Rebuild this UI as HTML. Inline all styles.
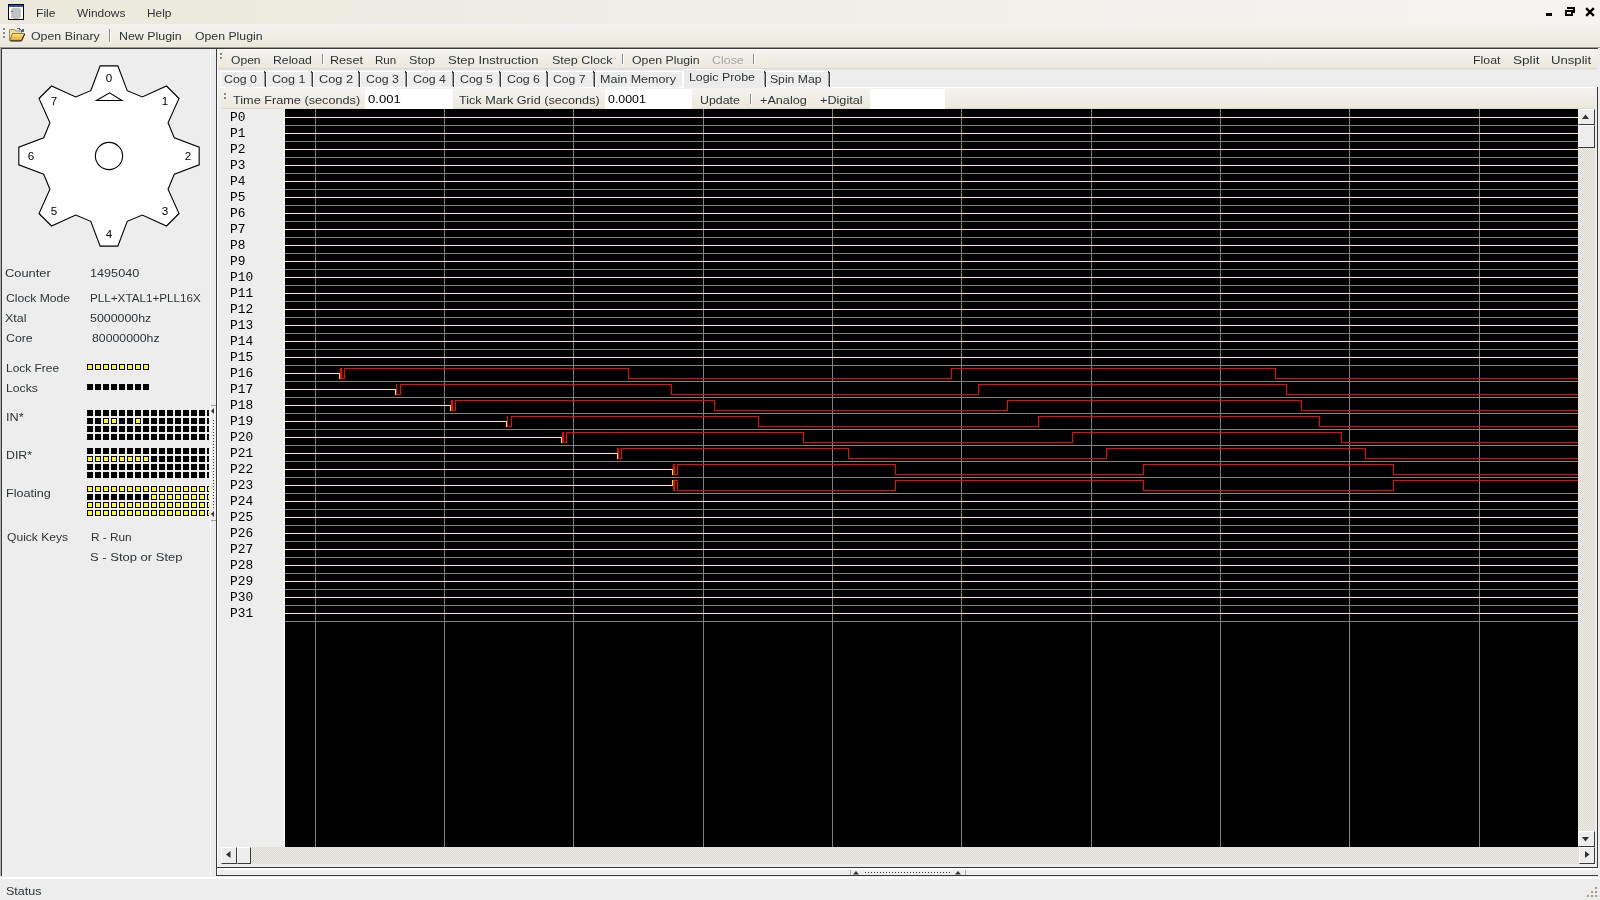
<!DOCTYPE html>
<html><head><meta charset="utf-8"><style>
html,body{margin:0;padding:0}
body{width:1600px;height:900px;position:relative;overflow:hidden;background:#ededed;font-family:"Liberation Sans",sans-serif}
.t{position:absolute;font-size:11.6px;line-height:14px;white-space:pre;transform-origin:0 0;will-change:transform}
.m{position:absolute;font-family:"Liberation Mono",monospace;font-size:12px;line-height:14px;white-space:pre;color:#000;transform-origin:0 0;transform:scaleX(1.07);will-change:transform}
.chk{position:absolute;background-color:#ededed;background-image:linear-gradient(45deg,#dbd7cb 25%,transparent 25%,transparent 75%,#dbd7cb 75%),linear-gradient(45deg,#dbd7cb 25%,transparent 25%,transparent 75%,#dbd7cb 75%);background-size:2px 2px;background-position:0 0,1px 1px}
</style></head><body>
<div style="position:absolute;left:0px;top:0px;width:1600px;height:24px;background:linear-gradient(to right,#ebe8db,#f0eee8 50%,#f5f4f2);"></div>
<svg style="position:absolute;left:7px;top:3px" width="18" height="18" shape-rendering="crispEdges"><rect x="1.5" y="1.5" width="15" height="15" rx="1" fill="#fff" stroke="#000" stroke-width="1.2"/><rect x="2" y="2" width="14" height="2" fill="#2a52a0"/><rect x="3.5" y="5" width="10.5" height="10.6" rx="3" fill="#c2c2c2"/><rect x="3.5" y="7.5" width="2" height="1.5" fill="#777"/></svg>
<svg style="position:absolute;left:1540px;top:0px" width="60" height="24" shape-rendering="crispEdges"><rect x="6" y="13" width="6" height="3" fill="#000"/><rect x="27" y="7" width="8" height="2" fill="#000"/><rect x="33" y="7" width="2" height="6" fill="#000"/><rect x="25" y="10" width="8" height="6" fill="#000"/><rect x="27" y="12" width="4" height="2" fill="#f5f4f2"/><path d="M47 9 L53 15 M53 9 L47 15" stroke="#000" stroke-width="2.4" stroke-linecap="square" shape-rendering="auto"/></svg>
<div style="position:absolute;left:0px;top:24px;width:1600px;height:23px;background:linear-gradient(#f4f3f1,#ebe8da);"></div>
<div style="position:absolute;left:0px;top:47px;width:1600px;height:1px;background:#9a9890;"></div>
<div style="position:absolute;left:0px;top:48px;width:1598px;height:1px;background:#3a3a3a;"></div>
<div style="position:absolute;left:3px;top:28px;width:2px;height:2px;background:#8a8a8a;"></div>
<div style="position:absolute;left:3px;top:32px;width:2px;height:2px;background:#8a8a8a;"></div>
<div style="position:absolute;left:3px;top:36px;width:2px;height:2px;background:#8a8a8a;"></div>
<svg style="position:absolute;left:9px;top:27px" width="18" height="16"><defs><linearGradient id="fg" x1="0" y1="0" x2="0" y2="1"><stop offset="0" stop-color="#fde68c"/><stop offset="1" stop-color="#eea21a"/></linearGradient></defs><path d="M0.5 2.5 H5.5 L7 4 H12.5 V6.5 H4 L0.5 13.5 Z" fill="#f8e08a" stroke="#8f8468" stroke-width="0.9"/><path d="M3.5 6.5 H15.5 L12.3 13.5 H0.8 Z" fill="url(#fg)" stroke="#7d7058" stroke-width="0.9"/><path d="M1.5 14 H12.5 L15.8 7" stroke="#1a1a1a" stroke-width="1" fill="none"/><rect x="8" y="1" width="3" height="1" fill="#3d64a8"/><rect x="10" y="2" width="2" height="1" fill="#3d64a8"/><rect x="13" y="2" width="2" height="3" fill="#3d64a8"/><rect x="12" y="3" width="1" height="2" fill="#3d64a8"/></svg>
<div style="position:absolute;left:109px;top:29px;width:1px;height:13px;background:#8a8a8a;"></div>
<div style="position:absolute;left:110px;top:30px;width:1px;height:13px;background:#ffffff;"></div>
<div style="position:absolute;left:0px;top:877px;width:1600px;height:2px;background:#ffffff;"></div>
<div style="position:absolute;left:1595px;top:887px;width:2px;height:2px;background:#a49d8a;"></div>
<div style="position:absolute;left:1591px;top:891px;width:2px;height:2px;background:#a49d8a;"></div>
<div style="position:absolute;left:1595px;top:891px;width:2px;height:2px;background:#a49d8a;"></div>
<div style="position:absolute;left:1587px;top:895px;width:2px;height:2px;background:#a49d8a;"></div>
<div style="position:absolute;left:1591px;top:895px;width:2px;height:2px;background:#a49d8a;"></div>
<div style="position:absolute;left:1595px;top:895px;width:2px;height:2px;background:#a49d8a;"></div>
<div style="position:absolute;left:1px;top:48px;width:1px;height:828px;background:#3a3a3a;"></div>
<div style="position:absolute;left:0px;top:48px;width:1px;height:828px;background:#b0b0b0;"></div>
<div style="position:absolute;left:210px;top:49px;width:1px;height:826px;background:#ffffff;"></div>
<svg style="position:absolute;left:0;top:0" width="215" height="260"><polygon points="90.77,90.70 100.16,65.83 117.84,65.83 127.23,90.70 142.28,96.93 166.51,85.99 179.01,98.49 168.07,122.72 174.30,137.77 199.17,147.16 199.17,164.84 174.30,174.23 168.07,189.28 179.01,213.51 166.51,226.01 142.28,215.07 127.23,221.30 117.84,246.17 100.16,246.17 90.77,221.30 75.72,215.07 51.49,226.01 38.99,213.51 49.93,189.28 43.70,174.23 18.83,164.84 18.83,147.16 43.70,137.77 49.93,122.72 38.99,98.49 51.49,85.99 75.72,96.93" fill="#fff" stroke="#000" stroke-width="1.1"/><circle cx="109" cy="156" r="13.6" fill="none" stroke="#000" stroke-width="1.1"/><path d="M96.5 100.5 L109.5 92.8 L122 100.5 Z" fill="none" stroke="#000" stroke-width="1.1"/></svg>
<div class="t" style="left:99.3px;top:71.0px;width:20px;text-align:center;color:#000">0</div>
<div class="t" style="left:154.6px;top:93.8px;width:20px;text-align:center;color:#000">1</div>
<div class="t" style="left:177.5px;top:149.0px;width:20px;text-align:center;color:#000">2</div>
<div class="t" style="left:154.6px;top:203.8px;width:20px;text-align:center;color:#000">3</div>
<div class="t" style="left:99.3px;top:226.5px;width:20px;text-align:center;color:#000">4</div>
<div class="t" style="left:44.0px;top:203.8px;width:20px;text-align:center;color:#000">5</div>
<div class="t" style="left:21.1px;top:149.0px;width:20px;text-align:center;color:#000">6</div>
<div class="t" style="left:44.0px;top:93.8px;width:20px;text-align:center;color:#000">7</div>
<svg style="position:absolute;left:0;top:0" width="209" height="600" shape-rendering="crispEdges"><rect x="87.5" y="364.5" width="5" height="5" fill="#ff0" stroke="#000" stroke-width="1"/><rect x="87" y="384" width="6" height="6" fill="#000"/><rect x="95.5" y="364.5" width="5" height="5" fill="#ff0" stroke="#000" stroke-width="1"/><rect x="95" y="384" width="6" height="6" fill="#000"/><rect x="103.5" y="364.5" width="5" height="5" fill="#ff0" stroke="#000" stroke-width="1"/><rect x="103" y="384" width="6" height="6" fill="#000"/><rect x="111.5" y="364.5" width="5" height="5" fill="#ff0" stroke="#000" stroke-width="1"/><rect x="111" y="384" width="6" height="6" fill="#000"/><rect x="119.5" y="364.5" width="5" height="5" fill="#ff0" stroke="#000" stroke-width="1"/><rect x="119" y="384" width="6" height="6" fill="#000"/><rect x="127.5" y="364.5" width="5" height="5" fill="#ff0" stroke="#000" stroke-width="1"/><rect x="127" y="384" width="6" height="6" fill="#000"/><rect x="135.5" y="364.5" width="5" height="5" fill="#ff0" stroke="#000" stroke-width="1"/><rect x="135" y="384" width="6" height="6" fill="#000"/><rect x="143.5" y="364.5" width="5" height="5" fill="#ff0" stroke="#000" stroke-width="1"/><rect x="143" y="384" width="6" height="6" fill="#000"/><rect x="87" y="410" width="6" height="6" fill="#000"/><rect x="95" y="410" width="6" height="6" fill="#000"/><rect x="103" y="410" width="6" height="6" fill="#000"/><rect x="111" y="410" width="6" height="6" fill="#000"/><rect x="119" y="410" width="6" height="6" fill="#000"/><rect x="127" y="410" width="6" height="6" fill="#000"/><rect x="135" y="410" width="6" height="6" fill="#000"/><rect x="143" y="410" width="6" height="6" fill="#000"/><rect x="151" y="410" width="6" height="6" fill="#000"/><rect x="159" y="410" width="6" height="6" fill="#000"/><rect x="167" y="410" width="6" height="6" fill="#000"/><rect x="175" y="410" width="6" height="6" fill="#000"/><rect x="183" y="410" width="6" height="6" fill="#000"/><rect x="191" y="410" width="6" height="6" fill="#000"/><rect x="199" y="410" width="6" height="6" fill="#000"/><rect x="207" y="410" width="6" height="6" fill="#000"/><rect x="87" y="418" width="6" height="6" fill="#000"/><rect x="95" y="418" width="6" height="6" fill="#000"/><rect x="103.5" y="418.5" width="5" height="5" fill="#ff0" stroke="#000" stroke-width="1"/><rect x="111.5" y="418.5" width="5" height="5" fill="#ff0" stroke="#000" stroke-width="1"/><rect x="119" y="418" width="6" height="6" fill="#000"/><rect x="127" y="418" width="6" height="6" fill="#000"/><rect x="135.5" y="418.5" width="5" height="5" fill="#ff0" stroke="#000" stroke-width="1"/><rect x="143" y="418" width="6" height="6" fill="#000"/><rect x="151" y="418" width="6" height="6" fill="#000"/><rect x="159" y="418" width="6" height="6" fill="#000"/><rect x="167" y="418" width="6" height="6" fill="#000"/><rect x="175" y="418" width="6" height="6" fill="#000"/><rect x="183" y="418" width="6" height="6" fill="#000"/><rect x="191" y="418" width="6" height="6" fill="#000"/><rect x="199" y="418" width="6" height="6" fill="#000"/><rect x="207" y="418" width="6" height="6" fill="#000"/><rect x="87" y="426" width="6" height="6" fill="#000"/><rect x="95" y="426" width="6" height="6" fill="#000"/><rect x="103" y="426" width="6" height="6" fill="#000"/><rect x="111" y="426" width="6" height="6" fill="#000"/><rect x="119" y="426" width="6" height="6" fill="#000"/><rect x="127" y="426" width="6" height="6" fill="#000"/><rect x="135" y="426" width="6" height="6" fill="#000"/><rect x="143" y="426" width="6" height="6" fill="#000"/><rect x="151" y="426" width="6" height="6" fill="#000"/><rect x="159" y="426" width="6" height="6" fill="#000"/><rect x="167" y="426" width="6" height="6" fill="#000"/><rect x="175" y="426" width="6" height="6" fill="#000"/><rect x="183" y="426" width="6" height="6" fill="#000"/><rect x="191" y="426" width="6" height="6" fill="#000"/><rect x="199" y="426" width="6" height="6" fill="#000"/><rect x="207" y="426" width="6" height="6" fill="#000"/><rect x="87" y="434" width="6" height="6" fill="#000"/><rect x="95" y="434" width="6" height="6" fill="#000"/><rect x="103" y="434" width="6" height="6" fill="#000"/><rect x="111" y="434" width="6" height="6" fill="#000"/><rect x="119" y="434" width="6" height="6" fill="#000"/><rect x="127" y="434" width="6" height="6" fill="#000"/><rect x="135" y="434" width="6" height="6" fill="#000"/><rect x="143" y="434" width="6" height="6" fill="#000"/><rect x="151" y="434" width="6" height="6" fill="#000"/><rect x="159" y="434" width="6" height="6" fill="#000"/><rect x="167" y="434" width="6" height="6" fill="#000"/><rect x="175" y="434" width="6" height="6" fill="#000"/><rect x="183" y="434" width="6" height="6" fill="#000"/><rect x="191" y="434" width="6" height="6" fill="#000"/><rect x="199" y="434" width="6" height="6" fill="#000"/><rect x="207" y="434" width="6" height="6" fill="#000"/><rect x="87" y="448" width="6" height="6" fill="#000"/><rect x="95" y="448" width="6" height="6" fill="#000"/><rect x="103" y="448" width="6" height="6" fill="#000"/><rect x="111" y="448" width="6" height="6" fill="#000"/><rect x="119" y="448" width="6" height="6" fill="#000"/><rect x="127" y="448" width="6" height="6" fill="#000"/><rect x="135" y="448" width="6" height="6" fill="#000"/><rect x="143" y="448" width="6" height="6" fill="#000"/><rect x="151" y="448" width="6" height="6" fill="#000"/><rect x="159" y="448" width="6" height="6" fill="#000"/><rect x="167" y="448" width="6" height="6" fill="#000"/><rect x="175" y="448" width="6" height="6" fill="#000"/><rect x="183" y="448" width="6" height="6" fill="#000"/><rect x="191" y="448" width="6" height="6" fill="#000"/><rect x="199" y="448" width="6" height="6" fill="#000"/><rect x="207" y="448" width="6" height="6" fill="#000"/><rect x="87.5" y="456.5" width="5" height="5" fill="#ff0" stroke="#000" stroke-width="1"/><rect x="95.5" y="456.5" width="5" height="5" fill="#ff0" stroke="#000" stroke-width="1"/><rect x="103.5" y="456.5" width="5" height="5" fill="#ff0" stroke="#000" stroke-width="1"/><rect x="111.5" y="456.5" width="5" height="5" fill="#ff0" stroke="#000" stroke-width="1"/><rect x="119.5" y="456.5" width="5" height="5" fill="#ff0" stroke="#000" stroke-width="1"/><rect x="127.5" y="456.5" width="5" height="5" fill="#ff0" stroke="#000" stroke-width="1"/><rect x="135.5" y="456.5" width="5" height="5" fill="#ff0" stroke="#000" stroke-width="1"/><rect x="143.5" y="456.5" width="5" height="5" fill="#ff0" stroke="#000" stroke-width="1"/><rect x="151" y="456" width="6" height="6" fill="#000"/><rect x="159" y="456" width="6" height="6" fill="#000"/><rect x="167" y="456" width="6" height="6" fill="#000"/><rect x="175" y="456" width="6" height="6" fill="#000"/><rect x="183" y="456" width="6" height="6" fill="#000"/><rect x="191" y="456" width="6" height="6" fill="#000"/><rect x="199" y="456" width="6" height="6" fill="#000"/><rect x="207" y="456" width="6" height="6" fill="#000"/><rect x="87" y="464" width="6" height="6" fill="#000"/><rect x="95" y="464" width="6" height="6" fill="#000"/><rect x="103" y="464" width="6" height="6" fill="#000"/><rect x="111" y="464" width="6" height="6" fill="#000"/><rect x="119" y="464" width="6" height="6" fill="#000"/><rect x="127" y="464" width="6" height="6" fill="#000"/><rect x="135" y="464" width="6" height="6" fill="#000"/><rect x="143" y="464" width="6" height="6" fill="#000"/><rect x="151" y="464" width="6" height="6" fill="#000"/><rect x="159" y="464" width="6" height="6" fill="#000"/><rect x="167" y="464" width="6" height="6" fill="#000"/><rect x="175" y="464" width="6" height="6" fill="#000"/><rect x="183" y="464" width="6" height="6" fill="#000"/><rect x="191" y="464" width="6" height="6" fill="#000"/><rect x="199" y="464" width="6" height="6" fill="#000"/><rect x="207" y="464" width="6" height="6" fill="#000"/><rect x="87" y="472" width="6" height="6" fill="#000"/><rect x="95" y="472" width="6" height="6" fill="#000"/><rect x="103" y="472" width="6" height="6" fill="#000"/><rect x="111" y="472" width="6" height="6" fill="#000"/><rect x="119" y="472" width="6" height="6" fill="#000"/><rect x="127" y="472" width="6" height="6" fill="#000"/><rect x="135" y="472" width="6" height="6" fill="#000"/><rect x="143" y="472" width="6" height="6" fill="#000"/><rect x="151" y="472" width="6" height="6" fill="#000"/><rect x="159" y="472" width="6" height="6" fill="#000"/><rect x="167" y="472" width="6" height="6" fill="#000"/><rect x="175" y="472" width="6" height="6" fill="#000"/><rect x="183" y="472" width="6" height="6" fill="#000"/><rect x="191" y="472" width="6" height="6" fill="#000"/><rect x="199" y="472" width="6" height="6" fill="#000"/><rect x="207" y="472" width="6" height="6" fill="#000"/><rect x="87.5" y="486.5" width="5" height="5" fill="#ff0" stroke="#000" stroke-width="1"/><rect x="95.5" y="486.5" width="5" height="5" fill="#ff0" stroke="#000" stroke-width="1"/><rect x="103.5" y="486.5" width="5" height="5" fill="#ff0" stroke="#000" stroke-width="1"/><rect x="111.5" y="486.5" width="5" height="5" fill="#ff0" stroke="#000" stroke-width="1"/><rect x="119.5" y="486.5" width="5" height="5" fill="#ff0" stroke="#000" stroke-width="1"/><rect x="127.5" y="486.5" width="5" height="5" fill="#ff0" stroke="#000" stroke-width="1"/><rect x="135.5" y="486.5" width="5" height="5" fill="#ff0" stroke="#000" stroke-width="1"/><rect x="143.5" y="486.5" width="5" height="5" fill="#ff0" stroke="#000" stroke-width="1"/><rect x="151.5" y="486.5" width="5" height="5" fill="#ff0" stroke="#000" stroke-width="1"/><rect x="159.5" y="486.5" width="5" height="5" fill="#ff0" stroke="#000" stroke-width="1"/><rect x="167.5" y="486.5" width="5" height="5" fill="#ff0" stroke="#000" stroke-width="1"/><rect x="175.5" y="486.5" width="5" height="5" fill="#ff0" stroke="#000" stroke-width="1"/><rect x="183.5" y="486.5" width="5" height="5" fill="#ff0" stroke="#000" stroke-width="1"/><rect x="191.5" y="486.5" width="5" height="5" fill="#ff0" stroke="#000" stroke-width="1"/><rect x="199.5" y="486.5" width="5" height="5" fill="#ff0" stroke="#000" stroke-width="1"/><rect x="207.5" y="486.5" width="5" height="5" fill="#ff0" stroke="#000" stroke-width="1"/><rect x="87" y="494" width="6" height="6" fill="#000"/><rect x="95" y="494" width="6" height="6" fill="#000"/><rect x="103" y="494" width="6" height="6" fill="#000"/><rect x="111" y="494" width="6" height="6" fill="#000"/><rect x="119" y="494" width="6" height="6" fill="#000"/><rect x="127" y="494" width="6" height="6" fill="#000"/><rect x="135" y="494" width="6" height="6" fill="#000"/><rect x="143" y="494" width="6" height="6" fill="#000"/><rect x="151.5" y="494.5" width="5" height="5" fill="#ff0" stroke="#000" stroke-width="1"/><rect x="159.5" y="494.5" width="5" height="5" fill="#ff0" stroke="#000" stroke-width="1"/><rect x="167.5" y="494.5" width="5" height="5" fill="#ff0" stroke="#000" stroke-width="1"/><rect x="175.5" y="494.5" width="5" height="5" fill="#ff0" stroke="#000" stroke-width="1"/><rect x="183.5" y="494.5" width="5" height="5" fill="#ff0" stroke="#000" stroke-width="1"/><rect x="191.5" y="494.5" width="5" height="5" fill="#ff0" stroke="#000" stroke-width="1"/><rect x="199.5" y="494.5" width="5" height="5" fill="#ff0" stroke="#000" stroke-width="1"/><rect x="207.5" y="494.5" width="5" height="5" fill="#ff0" stroke="#000" stroke-width="1"/><rect x="87.5" y="502.5" width="5" height="5" fill="#ff0" stroke="#000" stroke-width="1"/><rect x="95.5" y="502.5" width="5" height="5" fill="#ff0" stroke="#000" stroke-width="1"/><rect x="103.5" y="502.5" width="5" height="5" fill="#ff0" stroke="#000" stroke-width="1"/><rect x="111.5" y="502.5" width="5" height="5" fill="#ff0" stroke="#000" stroke-width="1"/><rect x="119.5" y="502.5" width="5" height="5" fill="#ff0" stroke="#000" stroke-width="1"/><rect x="127.5" y="502.5" width="5" height="5" fill="#ff0" stroke="#000" stroke-width="1"/><rect x="135.5" y="502.5" width="5" height="5" fill="#ff0" stroke="#000" stroke-width="1"/><rect x="143.5" y="502.5" width="5" height="5" fill="#ff0" stroke="#000" stroke-width="1"/><rect x="151.5" y="502.5" width="5" height="5" fill="#ff0" stroke="#000" stroke-width="1"/><rect x="159.5" y="502.5" width="5" height="5" fill="#ff0" stroke="#000" stroke-width="1"/><rect x="167.5" y="502.5" width="5" height="5" fill="#ff0" stroke="#000" stroke-width="1"/><rect x="175.5" y="502.5" width="5" height="5" fill="#ff0" stroke="#000" stroke-width="1"/><rect x="183.5" y="502.5" width="5" height="5" fill="#ff0" stroke="#000" stroke-width="1"/><rect x="191.5" y="502.5" width="5" height="5" fill="#ff0" stroke="#000" stroke-width="1"/><rect x="199.5" y="502.5" width="5" height="5" fill="#ff0" stroke="#000" stroke-width="1"/><rect x="207.5" y="502.5" width="5" height="5" fill="#ff0" stroke="#000" stroke-width="1"/><rect x="87.5" y="510.5" width="5" height="5" fill="#ff0" stroke="#000" stroke-width="1"/><rect x="95.5" y="510.5" width="5" height="5" fill="#ff0" stroke="#000" stroke-width="1"/><rect x="103.5" y="510.5" width="5" height="5" fill="#ff0" stroke="#000" stroke-width="1"/><rect x="111.5" y="510.5" width="5" height="5" fill="#ff0" stroke="#000" stroke-width="1"/><rect x="119.5" y="510.5" width="5" height="5" fill="#ff0" stroke="#000" stroke-width="1"/><rect x="127.5" y="510.5" width="5" height="5" fill="#ff0" stroke="#000" stroke-width="1"/><rect x="135.5" y="510.5" width="5" height="5" fill="#ff0" stroke="#000" stroke-width="1"/><rect x="143.5" y="510.5" width="5" height="5" fill="#ff0" stroke="#000" stroke-width="1"/><rect x="151.5" y="510.5" width="5" height="5" fill="#ff0" stroke="#000" stroke-width="1"/><rect x="159.5" y="510.5" width="5" height="5" fill="#ff0" stroke="#000" stroke-width="1"/><rect x="167.5" y="510.5" width="5" height="5" fill="#ff0" stroke="#000" stroke-width="1"/><rect x="175.5" y="510.5" width="5" height="5" fill="#ff0" stroke="#000" stroke-width="1"/><rect x="183.5" y="510.5" width="5" height="5" fill="#ff0" stroke="#000" stroke-width="1"/><rect x="191.5" y="510.5" width="5" height="5" fill="#ff0" stroke="#000" stroke-width="1"/><rect x="199.5" y="510.5" width="5" height="5" fill="#ff0" stroke="#000" stroke-width="1"/><rect x="207.5" y="510.5" width="5" height="5" fill="#ff0" stroke="#000" stroke-width="1"/></svg>
<svg style="position:absolute;left:210px;top:400px" width="6" height="125" shape-rendering="crispEdges"><rect x="1" y="5" width="5" height="1" fill="#999"/><rect x="1" y="120" width="5" height="1" fill="#999"/><path d="M1 11 L4 8 L4 14 Z" fill="#333" shape-rendering="auto"/><path d="M1 114 L4 111 L4 117 Z" fill="#333" shape-rendering="auto"/><rect x="3" y="20" width="1" height="1" fill="#333"/><rect x="3" y="23" width="1" height="1" fill="#333"/><rect x="3" y="26" width="1" height="1" fill="#333"/><rect x="3" y="29" width="1" height="1" fill="#333"/><rect x="3" y="32" width="1" height="1" fill="#333"/><rect x="3" y="35" width="1" height="1" fill="#333"/><rect x="3" y="38" width="1" height="1" fill="#333"/><rect x="3" y="41" width="1" height="1" fill="#333"/><rect x="3" y="44" width="1" height="1" fill="#333"/><rect x="3" y="47" width="1" height="1" fill="#333"/><rect x="3" y="50" width="1" height="1" fill="#333"/><rect x="3" y="53" width="1" height="1" fill="#333"/><rect x="3" y="56" width="1" height="1" fill="#333"/><rect x="3" y="59" width="1" height="1" fill="#333"/><rect x="3" y="62" width="1" height="1" fill="#333"/><rect x="3" y="65" width="1" height="1" fill="#333"/><rect x="3" y="68" width="1" height="1" fill="#333"/><rect x="3" y="71" width="1" height="1" fill="#333"/><rect x="3" y="74" width="1" height="1" fill="#333"/><rect x="3" y="77" width="1" height="1" fill="#333"/><rect x="3" y="80" width="1" height="1" fill="#333"/><rect x="3" y="83" width="1" height="1" fill="#333"/><rect x="3" y="86" width="1" height="1" fill="#333"/><rect x="3" y="89" width="1" height="1" fill="#333"/><rect x="3" y="92" width="1" height="1" fill="#333"/><rect x="3" y="95" width="1" height="1" fill="#333"/><rect x="3" y="98" width="1" height="1" fill="#333"/><rect x="3" y="101" width="1" height="1" fill="#333"/><rect x="3" y="104" width="1" height="1" fill="#333"/><rect x="3" y="107" width="1" height="1" fill="#333"/></svg>
<div style="position:absolute;left:216px;top:48px;width:1px;height:828px;background:#3a3a3a;"></div>
<div style="position:absolute;left:217px;top:49px;width:1381px;height:826px;background:#ededed;"></div>
<div style="position:absolute;left:217px;top:49px;width:1px;height:826px;background:#ffffff;"></div>
<div style="position:absolute;left:1597px;top:87px;width:1px;height:781px;background:#3a3a3a;"></div>
<div style="position:absolute;left:216px;top:875px;width:1382px;height:1px;background:#3a3a3a;"></div>
<div style="position:absolute;left:218px;top:49px;width:1379px;height:20px;background:linear-gradient(#f4f3f1,#ebe8da);"></div>
<div style="position:absolute;left:218px;top:49px;width:1379px;height:1px;background:#ffffff;"></div>
<div style="position:absolute;left:218px;top:68px;width:1379px;height:1px;background:#dcdad0;"></div>
<div style="position:absolute;left:220px;top:53px;width:2px;height:2px;background:#8a8a8a;"></div>
<div style="position:absolute;left:220px;top:57px;width:2px;height:2px;background:#8a8a8a;"></div>
<div style="position:absolute;left:322px;top:54px;width:1px;height:10px;background:#8a8a8a;"></div>
<div style="position:absolute;left:323px;top:55px;width:1px;height:10px;background:#ffffff;"></div>
<div style="position:absolute;left:622px;top:54px;width:1px;height:10px;background:#8a8a8a;"></div>
<div style="position:absolute;left:623px;top:55px;width:1px;height:10px;background:#ffffff;"></div>
<div style="position:absolute;left:753px;top:54px;width:1px;height:10px;background:#8a8a8a;"></div>
<div style="position:absolute;left:754px;top:55px;width:1px;height:10px;background:#ffffff;"></div>
<div style="position:absolute;left:218px;top:69px;width:1379px;height:1px;background:#e6e6e4;"></div>
<div style="position:absolute;left:220px;top:71px;width:463px;height:16px;background:#ededed;"></div>
<div style="position:absolute;left:220px;top:71px;width:463px;height:1px;background:#ffffff;"></div>
<div style="position:absolute;left:220px;top:71px;width:1px;height:16px;background:#ffffff;"></div>
<div style="position:absolute;left:682px;top:71px;width:1px;height:16px;background:#ffffff;"></div>
<div style="position:absolute;left:766px;top:71px;width:64px;height:16px;background:#ededed;"></div>
<div style="position:absolute;left:766px;top:71px;width:64px;height:1px;background:#ffffff;"></div>
<div style="position:absolute;left:683px;top:69px;width:82px;height:20px;background:#ebebeb;"></div>
<div style="position:absolute;left:684px;top:69px;width:81px;height:1px;background:#ffffff;"></div>
<div style="position:absolute;left:683px;top:70px;width:1px;height:18px;background:#ffffff;"></div>
<div style="position:absolute;left:265px;top:72px;width:1px;height:15px;background:#3a3a3a;"></div>
<div style="position:absolute;left:264px;top:73px;width:1px;height:13px;background:#9a9a9a;"></div>
<div style="position:absolute;left:266px;top:72px;width:1px;height:15px;background:#ffffff;"></div>
<div style="position:absolute;left:264px;top:71px;width:1px;height:2px;background:#3a3a3a;"></div>
<div style="position:absolute;left:312px;top:72px;width:1px;height:15px;background:#3a3a3a;"></div>
<div style="position:absolute;left:311px;top:73px;width:1px;height:13px;background:#9a9a9a;"></div>
<div style="position:absolute;left:313px;top:72px;width:1px;height:15px;background:#ffffff;"></div>
<div style="position:absolute;left:311px;top:71px;width:1px;height:2px;background:#3a3a3a;"></div>
<div style="position:absolute;left:359px;top:72px;width:1px;height:15px;background:#3a3a3a;"></div>
<div style="position:absolute;left:358px;top:73px;width:1px;height:13px;background:#9a9a9a;"></div>
<div style="position:absolute;left:360px;top:72px;width:1px;height:15px;background:#ffffff;"></div>
<div style="position:absolute;left:358px;top:71px;width:1px;height:2px;background:#3a3a3a;"></div>
<div style="position:absolute;left:406px;top:72px;width:1px;height:15px;background:#3a3a3a;"></div>
<div style="position:absolute;left:405px;top:73px;width:1px;height:13px;background:#9a9a9a;"></div>
<div style="position:absolute;left:407px;top:72px;width:1px;height:15px;background:#ffffff;"></div>
<div style="position:absolute;left:405px;top:71px;width:1px;height:2px;background:#3a3a3a;"></div>
<div style="position:absolute;left:453px;top:72px;width:1px;height:15px;background:#3a3a3a;"></div>
<div style="position:absolute;left:452px;top:73px;width:1px;height:13px;background:#9a9a9a;"></div>
<div style="position:absolute;left:454px;top:72px;width:1px;height:15px;background:#ffffff;"></div>
<div style="position:absolute;left:452px;top:71px;width:1px;height:2px;background:#3a3a3a;"></div>
<div style="position:absolute;left:500px;top:72px;width:1px;height:15px;background:#3a3a3a;"></div>
<div style="position:absolute;left:499px;top:73px;width:1px;height:13px;background:#9a9a9a;"></div>
<div style="position:absolute;left:501px;top:72px;width:1px;height:15px;background:#ffffff;"></div>
<div style="position:absolute;left:499px;top:71px;width:1px;height:2px;background:#3a3a3a;"></div>
<div style="position:absolute;left:547px;top:72px;width:1px;height:15px;background:#3a3a3a;"></div>
<div style="position:absolute;left:546px;top:73px;width:1px;height:13px;background:#9a9a9a;"></div>
<div style="position:absolute;left:548px;top:72px;width:1px;height:15px;background:#ffffff;"></div>
<div style="position:absolute;left:546px;top:71px;width:1px;height:2px;background:#3a3a3a;"></div>
<div style="position:absolute;left:594px;top:72px;width:1px;height:15px;background:#3a3a3a;"></div>
<div style="position:absolute;left:593px;top:73px;width:1px;height:13px;background:#9a9a9a;"></div>
<div style="position:absolute;left:595px;top:72px;width:1px;height:15px;background:#ffffff;"></div>
<div style="position:absolute;left:593px;top:71px;width:1px;height:2px;background:#3a3a3a;"></div>
<div style="position:absolute;left:765px;top:72px;width:1px;height:15px;background:#3a3a3a;"></div>
<div style="position:absolute;left:764px;top:73px;width:1px;height:13px;background:#9a9a9a;"></div>
<div style="position:absolute;left:766px;top:72px;width:1px;height:15px;background:#ffffff;"></div>
<div style="position:absolute;left:764px;top:71px;width:1px;height:2px;background:#3a3a3a;"></div>
<div style="position:absolute;left:829px;top:72px;width:1px;height:15px;background:#3a3a3a;"></div>
<div style="position:absolute;left:828px;top:73px;width:1px;height:13px;background:#9a9a9a;"></div>
<div style="position:absolute;left:830px;top:72px;width:1px;height:15px;background:#ffffff;"></div>
<div style="position:absolute;left:828px;top:71px;width:1px;height:2px;background:#3a3a3a;"></div>
<div style="position:absolute;left:218px;top:87px;width:465px;height:1px;background:#ffffff;"></div>
<div style="position:absolute;left:765px;top:87px;width:832px;height:1px;background:#ffffff;"></div>
<div style="position:absolute;left:221px;top:88px;width:1374px;height:21px;background:linear-gradient(#f4f3f1,#ebe8da);"></div>
<div style="position:absolute;left:221px;top:108px;width:1374px;height:1px;background:#dedbd0;"></div>
<div style="position:absolute;left:224px;top:93px;width:2px;height:2px;background:#8a8a8a;"></div>
<div style="position:absolute;left:224px;top:97px;width:2px;height:2px;background:#8a8a8a;"></div>
<div style="position:absolute;left:365px;top:89px;width:88px;height:20px;background:#ffffff;"></div>
<div style="position:absolute;left:605px;top:89px;width:87px;height:20px;background:#ffffff;"></div>
<div style="position:absolute;left:750px;top:94px;width:1px;height:10px;background:#8a8a8a;"></div>
<div style="position:absolute;left:751px;top:95px;width:1px;height:10px;background:#ffffff;"></div>
<div style="position:absolute;left:870px;top:89px;width:75px;height:20px;background:#ffffff;"></div>
<div class="m" style="left:230px;top:111px">P0</div>
<div class="m" style="left:230px;top:127px">P1</div>
<div class="m" style="left:230px;top:143px">P2</div>
<div class="m" style="left:230px;top:159px">P3</div>
<div class="m" style="left:230px;top:175px">P4</div>
<div class="m" style="left:230px;top:191px">P5</div>
<div class="m" style="left:230px;top:207px">P6</div>
<div class="m" style="left:230px;top:223px">P7</div>
<div class="m" style="left:230px;top:239px">P8</div>
<div class="m" style="left:230px;top:255px">P9</div>
<div class="m" style="left:230px;top:271px">P10</div>
<div class="m" style="left:230px;top:287px">P11</div>
<div class="m" style="left:230px;top:303px">P12</div>
<div class="m" style="left:230px;top:319px">P13</div>
<div class="m" style="left:230px;top:335px">P14</div>
<div class="m" style="left:230px;top:351px">P15</div>
<div class="m" style="left:230px;top:367px">P16</div>
<div class="m" style="left:230px;top:383px">P17</div>
<div class="m" style="left:230px;top:399px">P18</div>
<div class="m" style="left:230px;top:415px">P19</div>
<div class="m" style="left:230px;top:431px">P20</div>
<div class="m" style="left:230px;top:447px">P21</div>
<div class="m" style="left:230px;top:463px">P22</div>
<div class="m" style="left:230px;top:479px">P23</div>
<div class="m" style="left:230px;top:495px">P24</div>
<div class="m" style="left:230px;top:511px">P25</div>
<div class="m" style="left:230px;top:527px">P26</div>
<div class="m" style="left:230px;top:543px">P27</div>
<div class="m" style="left:230px;top:559px">P28</div>
<div class="m" style="left:230px;top:575px">P29</div>
<div class="m" style="left:230px;top:591px">P30</div>
<div class="m" style="left:230px;top:607px">P31</div>
<svg style="position:absolute;left:0;top:0" width="1600" height="900" shape-rendering="crispEdges"><rect x="284" y="109" width="1" height="738" fill="#fff"/><rect x="285" y="109" width="1293" height="738" fill="#000"/><rect x="315" y="109" width="1" height="738" fill="#808080"/><rect x="444" y="109" width="1" height="738" fill="#808080"/><rect x="573" y="109" width="1" height="738" fill="#808080"/><rect x="703" y="109" width="1" height="738" fill="#808080"/><rect x="832" y="109" width="1" height="738" fill="#808080"/><rect x="961" y="109" width="1" height="738" fill="#808080"/><rect x="1091" y="109" width="1" height="738" fill="#808080"/><rect x="1220" y="109" width="1" height="738" fill="#808080"/><rect x="1349" y="109" width="1" height="738" fill="#808080"/><rect x="1479" y="109" width="1" height="738" fill="#808080"/><rect x="285" y="125" width="1293" height="1" fill="#808080"/><rect x="285" y="141" width="1293" height="1" fill="#808080"/><rect x="285" y="157" width="1293" height="1" fill="#808080"/><rect x="285" y="173" width="1293" height="1" fill="#808080"/><rect x="285" y="189" width="1293" height="1" fill="#808080"/><rect x="285" y="205" width="1293" height="1" fill="#808080"/><rect x="285" y="221" width="1293" height="1" fill="#808080"/><rect x="285" y="237" width="1293" height="1" fill="#808080"/><rect x="285" y="253" width="1293" height="1" fill="#808080"/><rect x="285" y="269" width="1293" height="1" fill="#808080"/><rect x="285" y="285" width="1293" height="1" fill="#808080"/><rect x="285" y="301" width="1293" height="1" fill="#808080"/><rect x="285" y="317" width="1293" height="1" fill="#808080"/><rect x="285" y="333" width="1293" height="1" fill="#808080"/><rect x="285" y="349" width="1293" height="1" fill="#808080"/><rect x="285" y="365" width="1293" height="1" fill="#808080"/><rect x="285" y="381" width="1293" height="1" fill="#808080"/><rect x="285" y="397" width="1293" height="1" fill="#808080"/><rect x="285" y="413" width="1293" height="1" fill="#808080"/><rect x="285" y="429" width="1293" height="1" fill="#808080"/><rect x="285" y="445" width="1293" height="1" fill="#808080"/><rect x="285" y="461" width="1293" height="1" fill="#808080"/><rect x="285" y="477" width="1293" height="1" fill="#808080"/><rect x="285" y="493" width="1293" height="1" fill="#808080"/><rect x="285" y="509" width="1293" height="1" fill="#808080"/><rect x="285" y="525" width="1293" height="1" fill="#808080"/><rect x="285" y="541" width="1293" height="1" fill="#808080"/><rect x="285" y="557" width="1293" height="1" fill="#808080"/><rect x="285" y="573" width="1293" height="1" fill="#808080"/><rect x="285" y="589" width="1293" height="1" fill="#808080"/><rect x="285" y="605" width="1293" height="1" fill="#808080"/><rect x="285" y="621" width="1293" height="1" fill="#808080"/><rect x="285" y="117" width="1293" height="1" fill="#ffff00"/><rect x="285" y="133" width="1293" height="1" fill="#ffff00"/><rect x="285" y="149" width="1293" height="1" fill="#ffff00"/><rect x="285" y="165" width="1293" height="1" fill="#ffff00"/><rect x="285" y="181" width="1293" height="1" fill="#ffff00"/><rect x="285" y="197" width="1293" height="1" fill="#ffff00"/><rect x="285" y="213" width="1293" height="1" fill="#ffff00"/><rect x="285" y="229" width="1293" height="1" fill="#ffff00"/><rect x="285" y="245" width="1293" height="1" fill="#ffff00"/><rect x="285" y="261" width="1293" height="1" fill="#ffff00"/><rect x="285" y="277" width="1293" height="1" fill="#ffff00"/><rect x="285" y="293" width="1293" height="1" fill="#ffff00"/><rect x="285" y="309" width="1293" height="1" fill="#ffff00"/><rect x="285" y="325" width="1293" height="1" fill="#ffff00"/><rect x="285" y="341" width="1293" height="1" fill="#ffff00"/><rect x="285" y="357" width="1293" height="1" fill="#ffff00"/><rect x="340" y="368" width="1" height="11" fill="#ff0000"/><rect x="341" y="368" width="1" height="11" fill="#ff0000"/><rect x="340" y="378" width="5" height="1" fill="#ff0000"/><rect x="344" y="368" width="1" height="11" fill="#ff0000"/><rect x="285" y="373" width="55" height="1" fill="#ffff00"/><rect x="339" y="373" width="1" height="6" fill="#ffff00"/><rect x="344" y="368" width="285" height="1" fill="#ff0000"/><rect x="628" y="368" width="1" height="11" fill="#ff0000"/><rect x="628" y="378" width="324" height="1" fill="#ff0000"/><rect x="951" y="368" width="1" height="11" fill="#ff0000"/><rect x="951" y="368" width="325" height="1" fill="#ff0000"/><rect x="1275" y="368" width="1" height="11" fill="#ff0000"/><rect x="1275" y="378" width="303" height="1" fill="#ff0000"/><rect x="396" y="384" width="1" height="11" fill="#ff0000"/><rect x="396" y="394" width="5" height="1" fill="#ff0000"/><rect x="400" y="384" width="1" height="11" fill="#ff0000"/><rect x="285" y="389" width="111" height="1" fill="#ffff00"/><rect x="395" y="389" width="1" height="6" fill="#ffff00"/><rect x="400" y="384" width="272" height="1" fill="#ff0000"/><rect x="671" y="384" width="1" height="11" fill="#ff0000"/><rect x="671" y="394" width="308" height="1" fill="#ff0000"/><rect x="978" y="384" width="1" height="11" fill="#ff0000"/><rect x="978" y="384" width="309" height="1" fill="#ff0000"/><rect x="1286" y="384" width="1" height="11" fill="#ff0000"/><rect x="1286" y="394" width="292" height="1" fill="#ff0000"/><rect x="451" y="400" width="1" height="11" fill="#ff0000"/><rect x="452" y="400" width="1" height="11" fill="#ff0000"/><rect x="451" y="410" width="5" height="1" fill="#ff0000"/><rect x="455" y="400" width="1" height="11" fill="#ff0000"/><rect x="285" y="405" width="166" height="1" fill="#ffff00"/><rect x="450" y="405" width="1" height="6" fill="#ffff00"/><rect x="455" y="400" width="260" height="1" fill="#ff0000"/><rect x="714" y="400" width="1" height="11" fill="#ff0000"/><rect x="714" y="410" width="294" height="1" fill="#ff0000"/><rect x="1007" y="400" width="1" height="11" fill="#ff0000"/><rect x="1007" y="400" width="295" height="1" fill="#ff0000"/><rect x="1301" y="400" width="1" height="11" fill="#ff0000"/><rect x="1301" y="410" width="277" height="1" fill="#ff0000"/><rect x="507" y="416" width="1" height="11" fill="#ff0000"/><rect x="507" y="426" width="5" height="1" fill="#ff0000"/><rect x="511" y="416" width="1" height="11" fill="#ff0000"/><rect x="285" y="421" width="222" height="1" fill="#ffff00"/><rect x="506" y="421" width="1" height="6" fill="#ffff00"/><rect x="511" y="416" width="248" height="1" fill="#ff0000"/><rect x="758" y="416" width="1" height="11" fill="#ff0000"/><rect x="758" y="426" width="281" height="1" fill="#ff0000"/><rect x="1038" y="416" width="1" height="11" fill="#ff0000"/><rect x="1038" y="416" width="282" height="1" fill="#ff0000"/><rect x="1319" y="416" width="1" height="11" fill="#ff0000"/><rect x="1319" y="426" width="259" height="1" fill="#ff0000"/><rect x="562" y="432" width="1" height="11" fill="#ff0000"/><rect x="563" y="432" width="1" height="11" fill="#ff0000"/><rect x="562" y="442" width="5" height="1" fill="#ff0000"/><rect x="566" y="432" width="1" height="11" fill="#ff0000"/><rect x="285" y="437" width="277" height="1" fill="#ffff00"/><rect x="561" y="437" width="1" height="6" fill="#ffff00"/><rect x="566" y="432" width="238" height="1" fill="#ff0000"/><rect x="803" y="432" width="1" height="11" fill="#ff0000"/><rect x="803" y="442" width="270" height="1" fill="#ff0000"/><rect x="1072" y="432" width="1" height="11" fill="#ff0000"/><rect x="1072" y="432" width="270" height="1" fill="#ff0000"/><rect x="1341" y="432" width="1" height="11" fill="#ff0000"/><rect x="1341" y="442" width="237" height="1" fill="#ff0000"/><rect x="617" y="448" width="1" height="11" fill="#ff0000"/><rect x="618" y="448" width="1" height="11" fill="#ff0000"/><rect x="617" y="458" width="5" height="1" fill="#ff0000"/><rect x="621" y="448" width="1" height="11" fill="#ff0000"/><rect x="285" y="453" width="333" height="1" fill="#ffff00"/><rect x="617" y="453" width="1" height="6" fill="#ffff00"/><rect x="621" y="448" width="228" height="1" fill="#ff0000"/><rect x="848" y="448" width="1" height="11" fill="#ff0000"/><rect x="848" y="458" width="259" height="1" fill="#ff0000"/><rect x="1106" y="448" width="1" height="11" fill="#ff0000"/><rect x="1106" y="448" width="260" height="1" fill="#ff0000"/><rect x="1365" y="448" width="1" height="11" fill="#ff0000"/><rect x="1365" y="458" width="213" height="1" fill="#ff0000"/><rect x="673" y="464" width="1" height="11" fill="#ff0000"/><rect x="674" y="464" width="1" height="11" fill="#ff0000"/><rect x="673" y="474" width="5" height="1" fill="#ff0000"/><rect x="677" y="464" width="1" height="11" fill="#ff0000"/><rect x="285" y="469" width="388" height="1" fill="#ffff00"/><rect x="672" y="469" width="1" height="6" fill="#ffff00"/><rect x="677" y="464" width="219" height="1" fill="#ff0000"/><rect x="895" y="464" width="1" height="11" fill="#ff0000"/><rect x="895" y="474" width="249" height="1" fill="#ff0000"/><rect x="1143" y="464" width="1" height="11" fill="#ff0000"/><rect x="1143" y="464" width="251" height="1" fill="#ff0000"/><rect x="1393" y="464" width="1" height="11" fill="#ff0000"/><rect x="1393" y="474" width="185" height="1" fill="#ff0000"/><rect x="673" y="480" width="1" height="11" fill="#ff0000"/><rect x="674" y="480" width="1" height="11" fill="#ff0000"/><rect x="673" y="480" width="5" height="1" fill="#ff0000"/><rect x="677" y="480" width="1" height="11" fill="#ff0000"/><rect x="285" y="485" width="388" height="1" fill="#ffff00"/><rect x="672" y="480" width="1" height="6" fill="#ffff00"/><rect x="677" y="490" width="219" height="1" fill="#ff0000"/><rect x="895" y="480" width="1" height="11" fill="#ff0000"/><rect x="895" y="480" width="249" height="1" fill="#ff0000"/><rect x="1143" y="480" width="1" height="11" fill="#ff0000"/><rect x="1143" y="490" width="251" height="1" fill="#ff0000"/><rect x="1393" y="480" width="1" height="11" fill="#ff0000"/><rect x="1393" y="480" width="185" height="1" fill="#ff0000"/><rect x="285" y="501" width="1293" height="1" fill="#ffff00"/><rect x="285" y="517" width="1293" height="1" fill="#ffff00"/><rect x="285" y="533" width="1293" height="1" fill="#ffff00"/><rect x="285" y="549" width="1293" height="1" fill="#ffff00"/><rect x="285" y="565" width="1293" height="1" fill="#ffff00"/><rect x="285" y="581" width="1293" height="1" fill="#ffff00"/><rect x="285" y="597" width="1293" height="1" fill="#ffff00"/><rect x="285" y="613" width="1293" height="1" fill="#ffff00"/></svg>
<div class="chk" style="left:1578px;top:109px;width:17px;height:738px"></div>
<div style="position:absolute;left:1578px;top:109px;width:17px;height:16px;background:#ededed;box-sizing:border-box;border-top:1px solid #fff;border-left:1px solid #fff;border-right:1px solid #3a3a3a;border-bottom:1px solid #3a3a3a"></div>
<svg style="position:absolute;left:1578px;top:109px" width="17" height="16"><path d="M4 10 L7.5 5.5 L11 10 Z" fill="#2e3436"/></svg>
<div style="position:absolute;left:1578px;top:125px;width:17px;height:23px;background:#ededed;box-sizing:border-box;border-top:1px solid #fff;border-left:1px solid #fff;border-right:1px solid #3a3a3a;border-bottom:1px solid #3a3a3a"></div>
<div style="position:absolute;left:1578px;top:831px;width:17px;height:16px;background:#ededed;box-sizing:border-box;border-top:1px solid #fff;border-left:1px solid #fff;border-right:1px solid #3a3a3a;border-bottom:1px solid #3a3a3a"></div>
<svg style="position:absolute;left:1578px;top:831px" width="17" height="16"><path d="M4 6 L7.5 10.5 L11 6 Z" fill="#2e3436"/></svg>
<div class="chk" style="left:251px;top:847px;width:1328px;height:17px"></div>
<div style="position:absolute;left:221px;top:847px;width:16px;height:17px;background:#ededed;box-sizing:border-box;border-top:1px solid #fff;border-left:1px solid #fff;border-right:1px solid #3a3a3a;border-bottom:1px solid #3a3a3a"></div>
<svg style="position:absolute;left:221px;top:848px" width="16" height="16"><path d="M9.5 3 L5 6.5 L9.5 10 Z" fill="#2e3436"/></svg>
<div style="position:absolute;left:237px;top:847px;width:14px;height:17px;background:#ededed;box-sizing:border-box;border-top:1px solid #fff;border-left:1px solid #fff;border-right:1px solid #3a3a3a;border-bottom:1px solid #3a3a3a"></div>
<div style="position:absolute;left:1579px;top:847px;width:16px;height:17px;background:#ededed;box-sizing:border-box;border-top:1px solid #fff;border-left:1px solid #fff;border-right:1px solid #3a3a3a;border-bottom:1px solid #3a3a3a"></div>
<svg style="position:absolute;left:1579px;top:847px" width="16" height="17"><path d="M6 4 L10.5 7.5 L6 11 Z" fill="#2e3436"/></svg>
<div style="position:absolute;left:217px;top:867px;width:1381px;height:1px;background:#3a3a3a;"></div>
<div style="position:absolute;left:217px;top:868px;width:1380px;height:2px;background:#ffffff;"></div>
<svg style="position:absolute;left:845px;top:868px" width="125" height="8" shape-rendering="crispEdges"><rect x="5" y="2" width="1" height="5" fill="#aaa"/><rect x="120" y="2" width="1" height="5" fill="#aaa"/><path d="M8 6.5 L11 3 L14 6.5 Z" fill="#333" shape-rendering="auto"/><path d="M110 6.5 L113 3 L116 6.5 Z" fill="#333" shape-rendering="auto"/><rect x="20" y="4" width="1" height="1" fill="#333"/><rect x="23" y="4" width="1" height="1" fill="#333"/><rect x="26" y="4" width="1" height="1" fill="#333"/><rect x="29" y="4" width="1" height="1" fill="#333"/><rect x="32" y="4" width="1" height="1" fill="#333"/><rect x="35" y="4" width="1" height="1" fill="#333"/><rect x="38" y="4" width="1" height="1" fill="#333"/><rect x="41" y="4" width="1" height="1" fill="#333"/><rect x="44" y="4" width="1" height="1" fill="#333"/><rect x="47" y="4" width="1" height="1" fill="#333"/><rect x="50" y="4" width="1" height="1" fill="#333"/><rect x="53" y="4" width="1" height="1" fill="#333"/><rect x="56" y="4" width="1" height="1" fill="#333"/><rect x="59" y="4" width="1" height="1" fill="#333"/><rect x="62" y="4" width="1" height="1" fill="#333"/><rect x="65" y="4" width="1" height="1" fill="#333"/><rect x="68" y="4" width="1" height="1" fill="#333"/><rect x="71" y="4" width="1" height="1" fill="#333"/><rect x="74" y="4" width="1" height="1" fill="#333"/><rect x="77" y="4" width="1" height="1" fill="#333"/><rect x="80" y="4" width="1" height="1" fill="#333"/><rect x="83" y="4" width="1" height="1" fill="#333"/><rect x="86" y="4" width="1" height="1" fill="#333"/><rect x="89" y="4" width="1" height="1" fill="#333"/><rect x="92" y="4" width="1" height="1" fill="#333"/><rect x="95" y="4" width="1" height="1" fill="#333"/><rect x="98" y="4" width="1" height="1" fill="#333"/><rect x="101" y="4" width="1" height="1" fill="#333"/><rect x="104" y="4" width="1" height="1" fill="#333"/></svg>
<div class="t" style="left:36.45px;top:6px;color:#2e3436;transform:scaleX(1.0471)">File</div>
<div class="t" style="left:76.90px;top:6px;color:#2e3436;transform:scaleX(1.0277)">Windows</div>
<div class="t" style="left:146.58px;top:6px;color:#2e3436;transform:scaleX(1.0217)">Help</div>
<div class="t" style="left:30.70px;top:29px;color:#2e3436;transform:scaleX(1.0662)">Open Binary</div>
<div class="t" style="left:118.83px;top:29px;color:#2e3436;transform:scaleX(1.0702)">New Plugin</div>
<div class="t" style="left:194.70px;top:29px;color:#2e3436;transform:scaleX(1.0587)">Open Plugin</div>
<div class="t" style="left:5.92px;top:884px;color:#2e3436;transform:scaleX(1.0781)">Status</div>
<div class="t" style="left:5.49px;top:266px;color:#2e3436;transform:scaleX(1.1100)">Counter</div>
<div class="t" style="left:90.21px;top:266px;color:#2e3436;transform:scaleX(1.0909)">1495040</div>
<div class="t" style="left:5.55px;top:291px;color:#2e3436;transform:scaleX(1.0467)">Clock Mode</div>
<div class="t" style="left:90.49px;top:291px;color:#2e3436;transform:scaleX(1.0073)">PLL+XTAL1+PLL16X</div>
<div class="t" style="left:5.23px;top:311px;color:#2e3436;transform:scaleX(1.0737)">Xtal</div>
<div class="t" style="left:90.43px;top:311px;color:#2e3436;transform:scaleX(1.0679)">5000000hz</div>
<div class="t" style="left:5.54px;top:331px;color:#2e3436;transform:scaleX(1.0625)">Core</div>
<div class="t" style="left:91.50px;top:331px;color:#2e3436;transform:scaleX(1.0587)">80000000hz</div>
<div class="t" style="left:5.67px;top:361px;color:#2e3436;transform:scaleX(1.0300)">Lock Free</div>
<div class="t" style="left:5.65px;top:381px;color:#2e3436;transform:scaleX(1.0517)">Locks</div>
<div class="t" style="left:5.60px;top:410px;color:#2e3436;transform:scaleX(1.1000)">IN*</div>
<div class="t" style="left:5.63px;top:448px;color:#2e3436;transform:scaleX(1.0652)">DIR*</div>
<div class="t" style="left:5.61px;top:486px;color:#2e3436;transform:scaleX(1.0875)">Floating</div>
<div class="t" style="left:6.70px;top:530px;color:#2e3436;transform:scaleX(1.0431)">Quick Keys</div>
<div class="t" style="left:90.58px;top:530px;color:#2e3436;transform:scaleX(1.0184)">R - Run</div>
<div class="t" style="left:90.48px;top:550px;color:#2e3436;transform:scaleX(1.1210)">S - Stop or Step</div>
<div class="t" style="left:231.40px;top:53px;color:#2e3436;transform:scaleX(1.0429)">Open</div>
<div class="t" style="left:273.35px;top:53px;color:#2e3436;transform:scaleX(1.0543)">Reload</div>
<div class="t" style="left:330.41px;top:53px;color:#2e3436;transform:scaleX(1.0862)">Reset</div>
<div class="t" style="left:375.30px;top:53px;color:#2e3436;transform:scaleX(1.0000)">Run</div>
<div class="t" style="left:409.31px;top:53px;color:#2e3436;transform:scaleX(1.0870)">Stop</div>
<div class="t" style="left:448.48px;top:53px;color:#2e3436;transform:scaleX(1.1241)">Step Instruction</div>
<div class="t" style="left:551.52px;top:53px;color:#2e3436;transform:scaleX(1.0800)">Step Clock</div>
<div class="t" style="left:631.60px;top:53px;color:#2e3436;transform:scaleX(1.0603)">Open Plugin</div>
<div class="t" style="left:711.93px;top:53px;color:#a6a6a2;transform:scaleX(1.0714)">Close</div>
<div class="t" style="left:1473.34px;top:53px;color:#2e3436;transform:scaleX(1.0640)">Float</div>
<div class="t" style="left:1513.23px;top:53px;color:#2e3436;transform:scaleX(1.1714)">Split</div>
<div class="t" style="left:1551.37px;top:53px;color:#2e3436;transform:scaleX(1.1324)">Unsplit</div>
<div class="t" style="left:224.33px;top:72px;color:#2e3436;transform:scaleX(1.0667)">Cog 0</div>
<div class="t" style="left:271.52px;top:72px;color:#2e3436;transform:scaleX(1.0828)">Cog 1</div>
<div class="t" style="left:318.50px;top:72px;color:#2e3436;transform:scaleX(1.1034)">Cog 2</div>
<div class="t" style="left:365.53px;top:72px;color:#2e3436;transform:scaleX(1.0667)">Cog 3</div>
<div class="t" style="left:412.53px;top:72px;color:#2e3436;transform:scaleX(1.0667)">Cog 4</div>
<div class="t" style="left:459.53px;top:72px;color:#2e3436;transform:scaleX(1.0667)">Cog 5</div>
<div class="t" style="left:506.53px;top:72px;color:#2e3436;transform:scaleX(1.0667)">Cog 6</div>
<div class="t" style="left:553.35px;top:72px;color:#2e3436;transform:scaleX(1.0533)">Cog 7</div>
<div class="t" style="left:600.32px;top:72px;color:#2e3436;transform:scaleX(1.0812)">Main Memory</div>
<div class="t" style="left:689.33px;top:70px;color:#2e3436;transform:scaleX(1.0656)">Logic Probe</div>
<div class="t" style="left:769.55px;top:72px;color:#2e3436;transform:scaleX(1.0500)">Spin Map</div>
<div class="t" style="left:233.20px;top:93px;color:#2e3436;transform:scaleX(1.0948)">Time Frame (seconds)</div>
<div class="t" style="left:368.40px;top:92px;color:#000;transform:scaleX(1.1250)">0.001</div>
<div class="t" style="left:459.00px;top:93px;color:#2e3436;transform:scaleX(1.0899)">Tick Mark Grid (seconds)</div>
<div class="t" style="left:607.60px;top:92px;color:#000;transform:scaleX(1.0686)">0.0001</div>
<div class="t" style="left:699.53px;top:93px;color:#2e3436;transform:scaleX(1.0667)">Update</div>
<div class="t" style="left:759.90px;top:93px;color:#2e3436;transform:scaleX(1.0905)">+Analog</div>
<div class="t" style="left:820.00px;top:93px;color:#2e3436;transform:scaleX(1.0923)">+Digital</div>
</body></html>
